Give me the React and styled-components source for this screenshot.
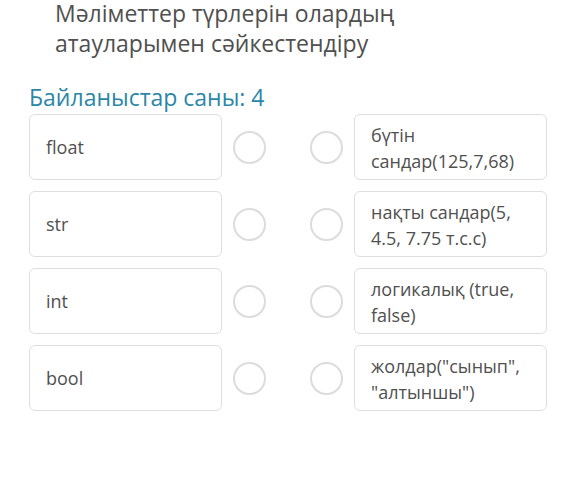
import React from "react";
import styled, { createGlobalStyle } from "styled-components";

const Global = createGlobalStyle`
  html, body { margin: 0; padding: 0; background: #ffffff; }
  body { font-family: "Open Sans", "Noto Sans", sans-serif; overflow: hidden; }
`;

const Page = styled.div`
  width: 563px;
  height: 481px;
  box-sizing: border-box;
  padding: 0 16px 0 29px;
`;

const Title = styled.h1`
  margin: -2px 0 0 26px;
  font-size: 23px;
  line-height: 30px;
  font-weight: 400;
  color: #505050;
`;

const Counter = styled.div`
  margin-top: 24px;
  font-size: 23px;
  line-height: 30px;
  color: #2b87a6;
`;

const Grid = styled.div`
  margin-top: 2px;
  display: grid;
  grid-template-columns: 193px 1fr 1fr 193px;
  column-gap: 11px;
  row-gap: 11px;
  grid-auto-rows: 66px;
`;

const Card = styled.div`
  box-sizing: border-box;
  border: 1.5px solid #dedede;
  border-radius: 6px;
  padding: ${(p) => (p.$multi ? "6.5px 12px 0 16px" : "0 12px 0 16px")};
  display: flex;
  align-items: ${(p) => (p.$multi ? "flex-start" : "center")};
  font-size: 18px;
  line-height: 26px;
  color: #505050;
  background: #fff;
`;

const Radio = styled.div`
  align-self: center;
  justify-self: ${(p) => (p.$end ? "end" : "start")};
  box-sizing: border-box;
  width: 33px;
  height: 33px;
  border-radius: 50%;
  border: 2px solid #dcdcdc;
`;

const left = ["float", "str", "int", "bool"];
const right = [
  "бүтін сандар(125,7,68)",
  "нақты сандар(5, 4.5, 7.75 т.с.с)",
  "логикалық (true, false)",
  'жолдар("сынып", "алтыншы")',
];

export default function App() {
  return (
    <Page>
      <Global />
      <Title>
        Мәліметтер түрлерін олардың
        <br />
        атауларымен сәйкестендіру
      </Title>
      <Counter>Байланыстар саны: 4</Counter>
      <Grid>
        {left.map((l, i) => (
          <React.Fragment key={l}>
            <Card>{l}</Card>
            <Radio />
            <Radio $end />
            <Card $multi>{right[i]}</Card>
          </React.Fragment>
        ))}
      </Grid>
    </Page>
  );
}
